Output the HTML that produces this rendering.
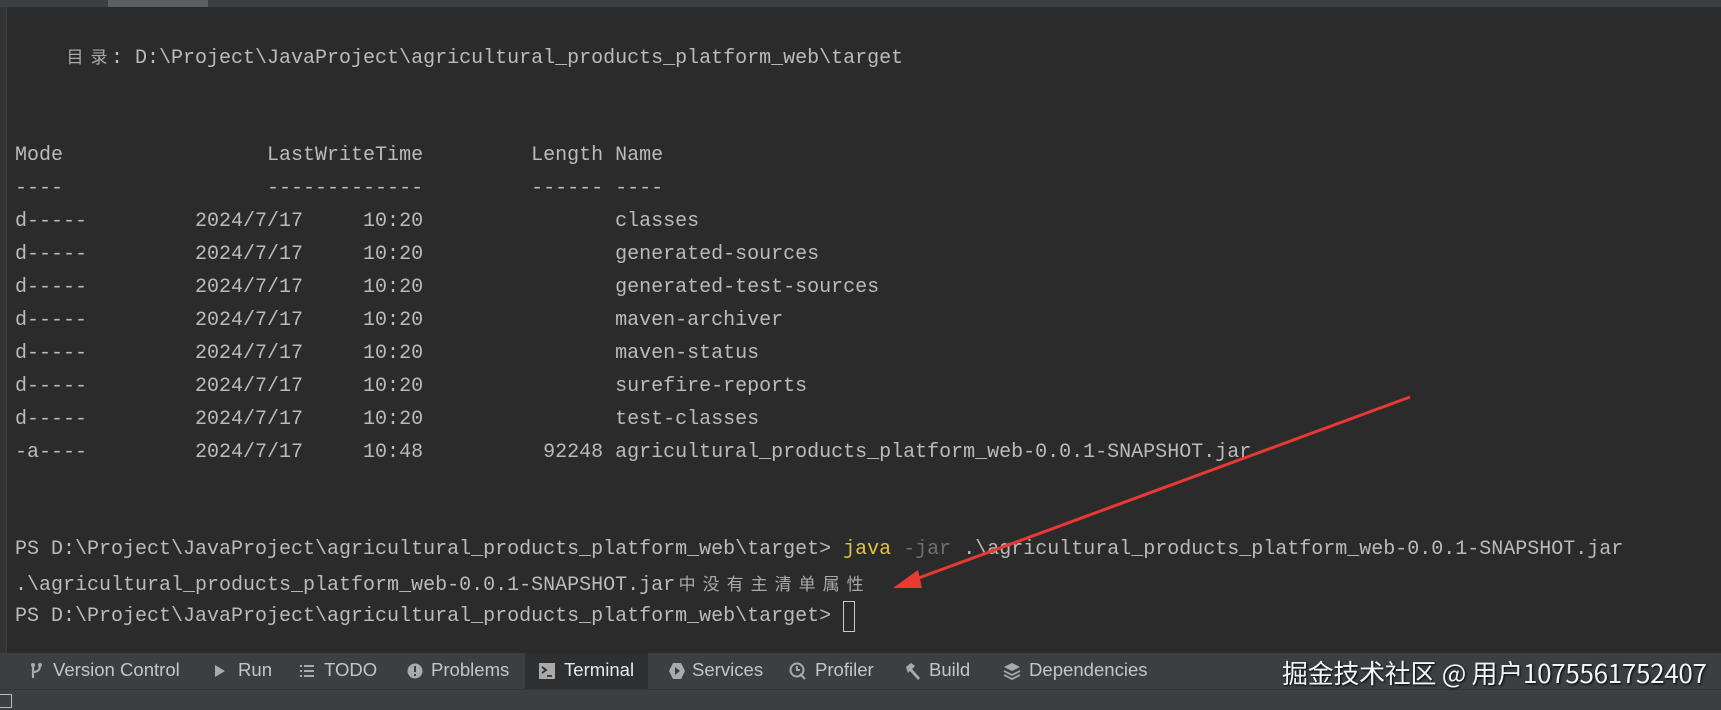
<!DOCTYPE html>
<html><head><meta charset="utf-8"><style>
*{margin:0;padding:0;box-sizing:border-box}
body{width:1721px;height:710px;background:#2b2b2b;position:relative;overflow:hidden;font-family:"Liberation Mono","Noto Sans CJK SC",monospace;color:#bbbbbb}
.l{position:absolute;left:15px;font-size:20px;white-space:pre;line-height:24px;height:24px}
.c{display:inline-block;width:24px;text-align:center;font-family:"Noto Sans CJK SC",sans-serif;font-size:17px;color:#a9a9a9}
.top{position:absolute;left:0;top:0;width:1721px;height:7px;background:#3c3f41}
.top i{position:absolute;left:108px;top:0;width:100px;height:7px;background:#5d6063}
.gut{position:absolute;left:0;top:7px;width:7px;height:646px;background:#313335;border-right:1px solid #3d3f41}
.bar{position:absolute;left:0;top:653px;width:1721px;height:36px;background:#3c3f41;font-family:"Liberation Sans",sans-serif;font-size:18px;color:#c5c5c5}
.bar span{position:absolute;top:7px;transform:scaleX(1.03);transform-origin:left}
.bar svg{position:absolute;top:9px}
.tab{position:absolute;left:525px;top:0;width:123px;height:36px;background:#2d2f30}
.bot{position:absolute;left:0;top:689px;width:1721px;height:21px;background:#3c3f41;border-top:1px solid #323435}
.wm{position:absolute;left:1282px;top:654px;font-family:"Noto Sans CJK SC","Liberation Sans",sans-serif;font-size:26px;color:#f4f4f4;text-shadow:1px 1px 2px #000;white-space:nowrap;letter-spacing:-0.3px}
</style></head><body>
<div class="top"><i></i></div>
<div class="gut"></div>
<div class="l" style="top:44px">    <span class="c">目</span><span class="c">录</span>: D:\Project\JavaProject\agricultural_products_platform_web\target</div>
<div class="l" style="top:144px">Mode                 LastWriteTime         Length Name</div>
<div class="l" style="top:177px">----                 -------------         ------ ----</div>
<div class="l" style="top:210px">d-----         2024/7/17     10:20                classes</div>
<div class="l" style="top:243px">d-----         2024/7/17     10:20                generated-sources</div>
<div class="l" style="top:276px">d-----         2024/7/17     10:20                generated-test-sources</div>
<div class="l" style="top:309px">d-----         2024/7/17     10:20                maven-archiver</div>
<div class="l" style="top:342px">d-----         2024/7/17     10:20                maven-status</div>
<div class="l" style="top:375px">d-----         2024/7/17     10:20                surefire-reports</div>
<div class="l" style="top:408px">d-----         2024/7/17     10:20                test-classes</div>
<div class="l" style="top:441px">-a----         2024/7/17     10:48          92248 agricultural_products_platform_web-0.0.1-SNAPSHOT.jar</div>
<div class="l" style="top:538px">PS D:\Project\JavaProject\agricultural_products_platform_web\target> <span style="color:#e0c248">java</span> <span style="color:#6f6f6f">-jar</span> .\agricultural_products_platform_web-0.0.1-SNAPSHOT.jar</div>
<div class="l" style="top:571px">.\agricultural_products_platform_web-0.0.1-SNAPSHOT.jar<span class="c">中</span><span class="c">没</span><span class="c">有</span><span class="c">主</span><span class="c">清</span><span class="c">单</span><span class="c">属</span><span class="c">性</span></div>
<div class="l" style="top:605px">PS D:\Project\JavaProject\agricultural_products_platform_web\target> </div>
<div style="position:absolute;left:843px;top:601px;width:12px;height:31px;border:1.5px solid #c8c8c8"></div>
<svg style="position:absolute;left:0;top:0" width="1721" height="710"><line x1="1410" y1="397" x2="905" y2="583" stroke="#e83a33" stroke-width="3"/><polygon points="893,588 918,570 922,588" fill="#e83a33"/></svg>
<div class="bar"><div class="tab"></div>
<svg style="left:29px" width="14" height="18"><path d="M4 2v14M4 10c6 0 7-3 7-8" stroke="#aaa" stroke-width="2.2" fill="none"/><circle cx="4" cy="3" r="2" fill="#aaa"/><circle cx="11" cy="3" r="2" fill="#aaa"/></svg><span style="left:53px">Version Control</span>
<svg style="left:213px" width="14" height="18"><path d="M2 3l10 6-10 6z" fill="#aaa"/></svg><span style="left:238px">Run</span>
<svg style="left:299px" width="16" height="18"><path d="M1 4h2M1 9h2M1 14h2M5 4h10M5 9h10M5 14h10" stroke="#aaa" stroke-width="2"/></svg><span style="left:324px">TODO</span>
<svg style="left:407px" width="16" height="18"><circle cx="8" cy="9" r="7.5" fill="#aaa"/><path d="M8 4v6M8 12v2" stroke="#3c3f41" stroke-width="2"/></svg><span style="left:431px">Problems</span>
<svg style="left:539px" width="16" height="18"><rect x="0" y="1" width="16" height="16" fill="#aaa"/><path d="M3 5l4 3-4 3M8 14h5" stroke="#2d2f30" stroke-width="1.8" fill="none"/></svg><span style="left:564px;color:#e8e8e8">Terminal</span>
<svg style="left:668px" width="18" height="18"><path d="M5 1h8l4 8-4 8H5L1 9z" fill="#aaa"/><path d="M7 5l5 4-5 4z" fill="#3c3f41"/></svg><span style="left:692px">Services</span>
<svg style="left:789px" width="18" height="18"><circle cx="8" cy="8" r="6.5" stroke="#aaa" stroke-width="2" fill="none"/><path d="M8 4v4h3M11 12l5 5" stroke="#aaa" stroke-width="2"/></svg><span style="left:815px">Profiler</span>
<svg style="left:904px" width="18" height="18"><path d="M2 5l5-4 4 3-3 3 8 9-2 2-8-9-2 2z" fill="#aaa"/></svg><span style="left:929px">Build</span>
<svg style="left:1003px" width="18" height="18"><path d="M9 1l8 4-8 4-8-4z" fill="#aaa"/><path d="M1 9l8 4 8-4M1 13l8 4 8-4" stroke="#aaa" stroke-width="1.8" fill="none"/></svg><span style="left:1029px">Dependencies</span>
</div>
<div class="bot"><div style="position:absolute;left:0;top:4px;width:12px;height:14px;border:1.5px solid #bbb;border-left:none"></div></div>
<div class="wm">掘金技术社区 @ 用户1075561752407</div>
</body></html>
